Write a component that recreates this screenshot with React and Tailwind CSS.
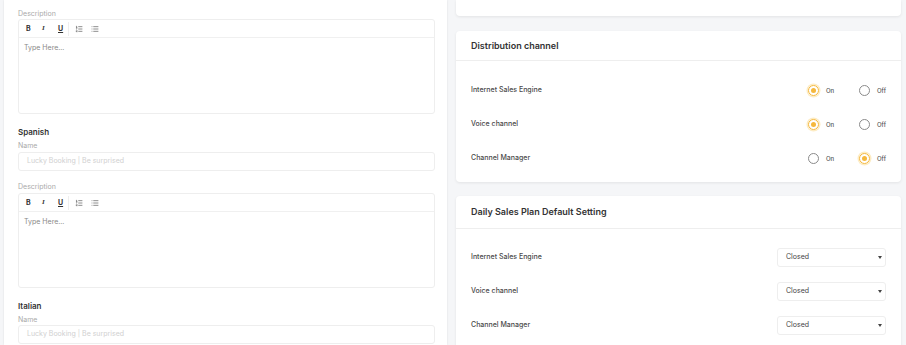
import React from "react";
import { List, ListOrdered } from "lucide-react";

const font = { fontFamily: "Inter, 'Noto Sans', sans-serif" };

const Toolbar = () => (
  <div className="h-[18px] flex items-center pl-[7px] border-b border-[#f0f0f0] text-[#333]">
    <span className="w-[16px] text-[7px] font-bold leading-none">B</span>
    <span className="w-[16px] text-[7px] font-bold italic leading-none" style={{ fontFamily: "'Liberation Serif', serif" }}>
      I
    </span>
    <span className="w-[10px] text-[7px] font-bold underline leading-none">U</span>
    <span className="h-[14px] w-px bg-[#eeeeee] mr-[6px]"></span>
    <ListOrdered size={8} strokeWidth={2} className="text-[#555] mr-[8px]" />
    <List size={8} strokeWidth={2} className="text-[#555]" />
  </div>
);

const Editor = () => (
  <div className="h-[95px] border border-[#eeeeee] rounded-[3px] flex flex-col">
    <Toolbar />
    <div className="flex-1 pl-[5px] pt-[5px] text-[7px] leading-[10px] text-[#888]">Type Here...</div>
  </div>
);

const NameInput = () => (
  <div className="h-[19px] border border-[#eeeeee] rounded-[3px] flex items-center pl-[8px] text-[7px] text-[#d0d0d0]">
    Lucky Booking | Be surprised
  </div>
);

const Radio = ({ checked }) =>
  checked ? (
    <span className="w-[11px] h-[11px] rounded-full border-[1.5px] border-[#f5b83d] flex items-center justify-center shadow-[0_0_0_1.5px_#fdecc4]">
      <span className="w-[5px] h-[5px] rounded-full bg-[#f5b83d]"></span>
    </span>
  ) : (
    <span className="w-[11px] h-[11px] rounded-full border border-[#8a8a8a]"></span>
  );

const RadioRow = ({ label, on }) => (
  <div className="h-[34px] flex items-center justify-between">
    <span className="text-[7px] font-medium text-[#4a4a4a]">{label}</span>
    <div className="flex items-center">
      <label className="w-[51px] flex items-center gap-[7px]">
        <Radio checked={on} />
        <span className="text-[6px] font-medium text-[#555]">On</span>
      </label>
      <label className="w-[27px] flex items-center gap-[7px]">
        <Radio checked={!on} />
        <span className="text-[6px] font-medium text-[#555]">Off</span>
      </label>
    </div>
  </div>
);

const SelectRow = ({ label }) => (
  <div className="h-[34px] flex items-center justify-between">
    <span className="text-[7px] font-medium text-[#4a4a4a]">{label}</span>
    <div className="w-[109px] h-[19px] border border-[#eeeeee] rounded-[3px] flex items-center justify-between pl-[8px] pr-[3px] text-[7px] text-[#444]">
      <span>Closed</span>
      <span className="w-0 h-0 border-l-[2.5px] border-r-[2.5px] border-t-[3px] border-l-transparent border-r-transparent border-t-[#444]"></span>
    </div>
  </div>
);

export default function App() {
  return (
    <div className="w-[906px] h-[345px] overflow-hidden bg-[#f5f6f8] flex pl-[4px] pr-[5px] gap-[9px]" style={font}>
      <div className="w-[443px] shrink-0 bg-white shadow-[0_0_2px_rgba(0,0,0,0.1)] pl-[14px] pr-[12px] pt-[9px]">
        <div className="text-[7px] leading-[10px] text-[#aaaaaa]">Description</div>
        <Editor />
        <div className="mt-[12px] text-[8px] leading-[12px] font-semibold text-[#333]">Spanish</div>
        <div className="mt-[3px] mb-px text-[7px] leading-[10px] text-[#aaaaaa]">Name</div>
        <NameInput />
        <div className="mt-[11px] mb-px text-[7px] leading-[10px] text-[#aaaaaa]">Description</div>
        <Editor />
        <div className="mt-[12px] text-[8px] leading-[12px] font-semibold text-[#333]">Italian</div>
        <div className="mt-[3px] text-[7px] leading-[10px] text-[#aaaaaa]">Name</div>
        <NameInput />
      </div>

      <div className="flex-1 flex flex-col gap-[15px]">
        <div className="h-[16px] shrink-0 bg-white rounded-b-[4px] shadow-[0_1px_3px_rgba(0,0,0,0.08)]"></div>

        <div className="shrink-0 bg-white rounded-[4px] shadow-[0_1px_3px_rgba(0,0,0,0.08)]">
          <div className="h-[30px] flex items-center px-[15px] border-b border-[#eeeeee] text-[9px] font-semibold text-[#333]">
            Distribution channel
          </div>
          <div className="px-[15px] pt-[12px] pb-[7px]">
            <RadioRow label="Internet Sales Engine" on={true} />
            <RadioRow label="Voice channel" on={true} />
            <RadioRow label="Channel Manager" on={false} />
          </div>
        </div>

        <div className="shrink-0 -mt-px bg-white rounded-[4px] shadow-[0_1px_3px_rgba(0,0,0,0.08)]">
          <div className="h-[33px] flex items-center px-[15px] border-b border-[#eeeeee] text-[9px] font-semibold text-[#333]">
            Daily Sales Plan Default Setting
          </div>
          <div className="px-[15px] pt-[11px] pb-[9px]">
            <SelectRow label="Internet Sales Engine" />
            <SelectRow label="Voice channel" />
            <SelectRow label="Channel Manager" />
          </div>
        </div>
      </div>
    </div>
  );
}
